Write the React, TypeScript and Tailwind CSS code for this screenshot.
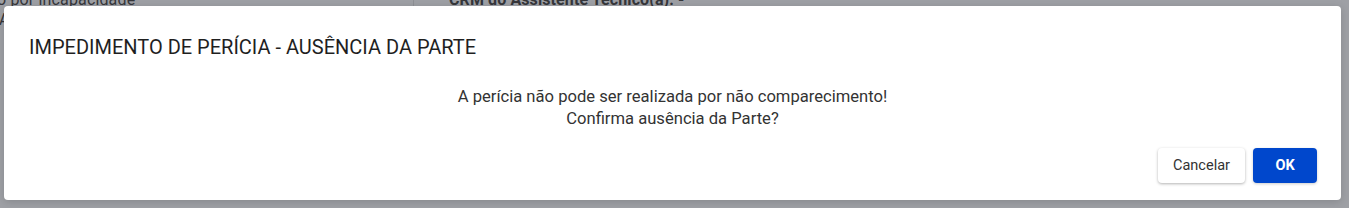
import React from "react";

export default function App() {
  return (
    <div className="relative h-[208px] w-full overflow-hidden bg-[#9ea0a5] font-['Roboto',sans-serif]">
      {/* page behind the overlay */}
      <div className="flex -mt-[10px] text-[16px] leading-[20px] text-[#35363a]">
        <div className="w-[414px] border-r border-[#8e9095]">
          <p className="-ml-[3px] tracking-[0.15px]">o por incapacidade</p>
          <p className="-ml-[1px]">A</p>
        </div>
        <div className="pl-[35px] font-bold tracking-[0.1px]">CRM do Assistente Técnico(a): -</div>
      </div>

      {/* dialog */}
      <div className="absolute left-[4px] top-[6px] w-[1337px] h-[194px] rounded-[4px] bg-white flex flex-col shadow-[0_2px_8px_rgba(0,0,0,0.15)]">
        <h2 className="pl-[25px] pt-[29px] text-[20px] leading-[24px] text-[#1f1f1f] font-normal">
          IMPEDIMENTO DE PERÍCIA - AUSÊNCIA DA PARTE
        </h2>
        <div className="mt-[27px] text-center text-[16.6px] leading-[22px] text-[#333]">
          <p>A perícia não pode ser realizada por não comparecimento!</p>
          <p>Confirma ausência da Parte?</p>
        </div>
        <div className="mt-auto mb-[17px] pr-[24px] flex justify-end gap-[8px]">
          <button className="w-[87px] h-[35px] rounded-[4px] bg-white text-[14.5px] text-[#333] shadow-[0_1px_3px_rgba(0,0,0,0.3)]">
            Cancelar
          </button>
          <button className="w-[64px] h-[35px] rounded-[4px] bg-[#0047cc] text-[14.5px] font-bold text-white shadow-[0_1px_3px_rgba(0,0,0,0.2)]">
            OK
          </button>
        </div>
      </div>
    </div>
  );
}
